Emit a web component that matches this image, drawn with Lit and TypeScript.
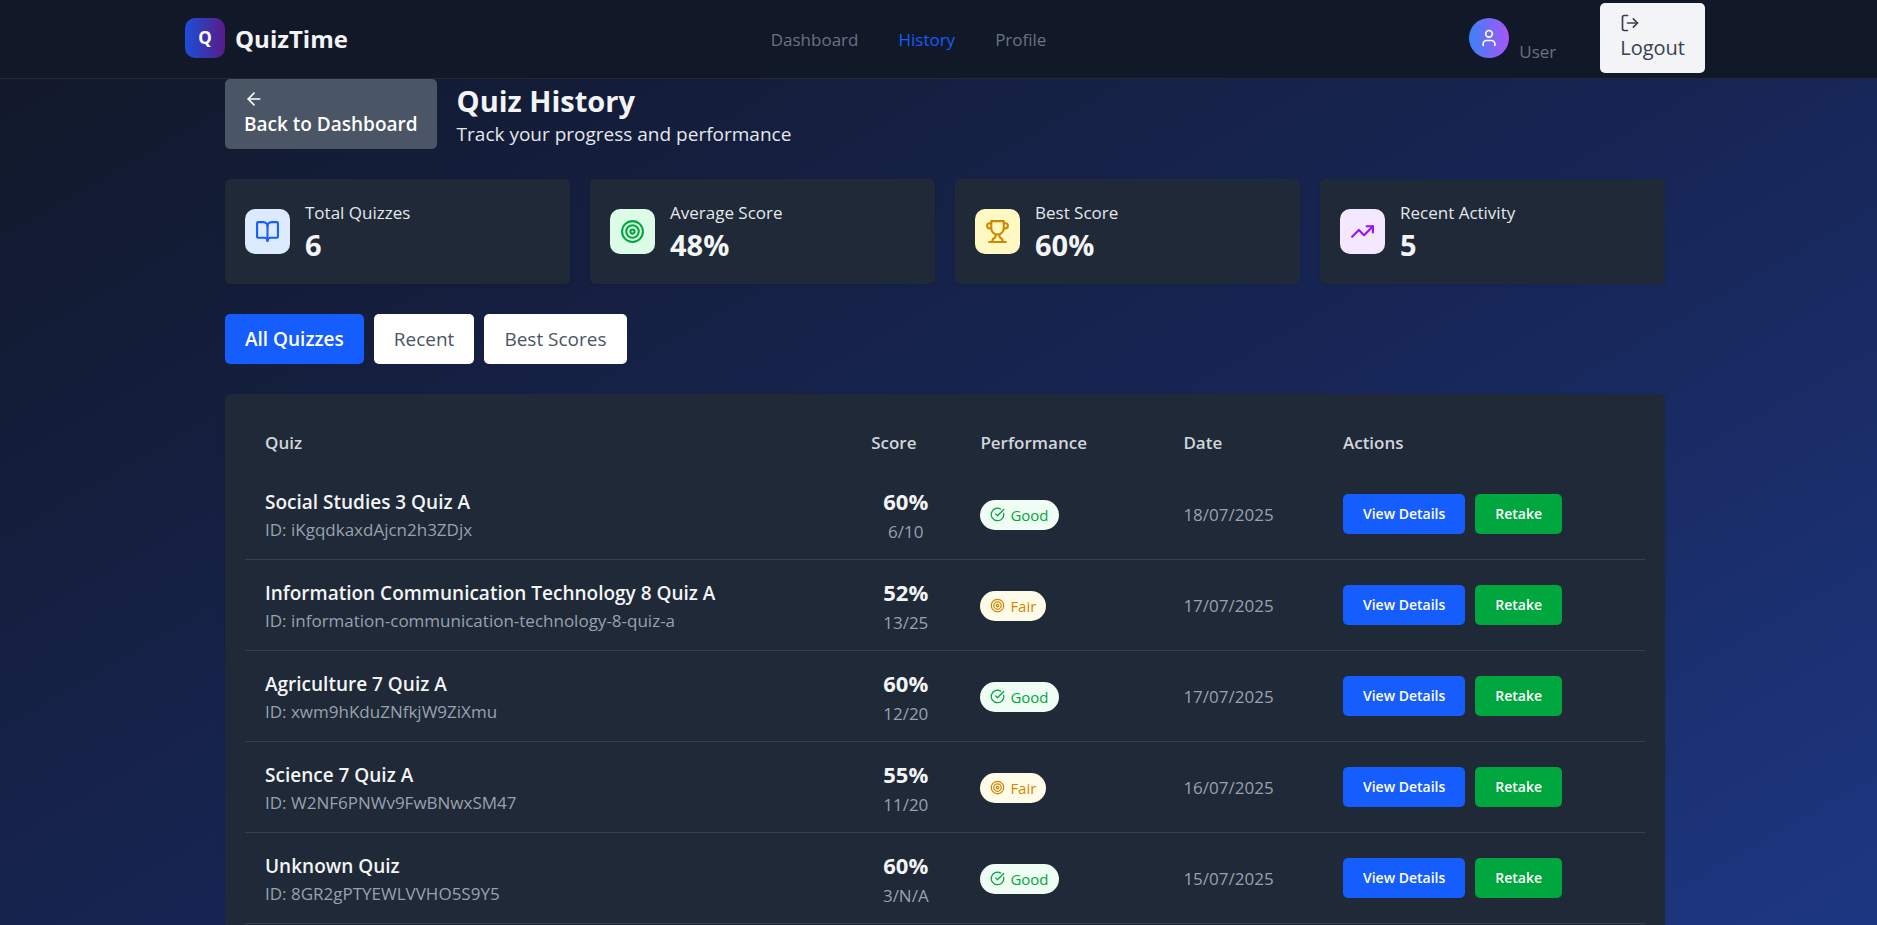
import { LitElement, html, css, svg } from "lit";
import { customElement, state } from "lit/decorators.js";
import { classMap } from "lit/directives/class-map.js";

const shapes = {
  book: svg`<path d="M12 7v14"/><path d="M3 18a1 1 0 0 1-1-1V4a1 1 0 0 1 1-1h5a4 4 0 0 1 4 4 4 4 0 0 1 4-4h5a1 1 0 0 1 1 1v13a1 1 0 0 1-1 1h-6a3 3 0 0 0-3 3 3 3 0 0 0-3-3z"/>`,
  target: svg`<circle cx="12" cy="12" r="10"/><circle cx="12" cy="12" r="6"/><circle cx="12" cy="12" r="2"/>`,
  trophy: svg`<path d="M6 9H4.500a2.500 2.500 0 0 1 0-5H6"/><path d="M18 9h1.500a2.500 2.500 0 0 0 0-5H18"/><path d="M4 22h16"/><path d="M10 14.660V17c0 .55-.47.98-.97 1.210C7.850 18.750 7 20.240 7 22"/><path d="M14 14.660V17c0 .55.47.98.97 1.210C16.150 18.750 17 20.240 17 22"/><path d="M18 2H6v7a6 6 0 0 0 12 0V2Z"/>`,
  trend: svg`<path d="M22 7l-8.500 8.500-5-5L2 17"/><path d="M16 7h6v6"/>`,
  check: svg`<path d="M21.801 10A10 10 0 1 1 17 3.335"/><path d="m9 11 3 3L22 4"/>`,
  arrowLeft: svg`<path d="m12 19-7-7 7-7"/><path d="M19 12H5"/>`,
  logout: svg`<path d="M9 21H5a2 2 0 0 1-2-2V5a2 2 0 0 1 2-2h4"/><path d="m16 17 5-5-5-5"/><path d="M21 12H9"/>`,
  user: svg`<path d="M19 21v-2a4 4 0 0 0-4-4H9a4 4 0 0 0-4 4v2"/><circle cx="12" cy="7" r="4"/>`,
};

type Shape = keyof typeof shapes;

const icon = (name: Shape) => html`
  <svg class="icon" viewBox="0 0 24 24" fill="none" stroke="currentColor" stroke-width="2"
    stroke-linecap="round" stroke-linejoin="round" aria-hidden="true">${shapes[name]}</svg>`;

interface Attempt {
  title: string;
  id: string;
  percent: number;
  marks: string;
  date: string;
}

const attempts: Attempt[] = [
  { title: "Social Studies 3 Quiz A", id: "iKgqdkaxdAjcn2h3ZDjx", percent: 60, marks: "6/10", date: "18/07/2025" },
  { title: "Information Communication Technology 8 Quiz A", id: "information-communication-technology-8-quiz-a", percent: 52, marks: "13/25", date: "17/07/2025" },
  { title: "Agriculture 7 Quiz A", id: "xwm9hKduZNfkjW9ZiXmu", percent: 60, marks: "12/20", date: "17/07/2025" },
  { title: "Science 7 Quiz A", id: "W2NF6PNWv9FwBNwxSM47", percent: 55, marks: "11/20", date: "16/07/2025" },
  { title: "Unknown Quiz", id: "8GR2gPTYEWLVVHO5S9Y5", percent: 60, marks: "3/N/A", date: "15/07/2025" },
];

const stats: { label: string; value: string; shape: Shape; tone: string }[] = [
  { label: "Total Quizzes", value: "6", shape: "book", tone: "blue" },
  { label: "Average Score", value: "48%", shape: "target", tone: "green" },
  { label: "Best Score", value: "60%", shape: "trophy", tone: "yellow" },
  { label: "Recent Activity", value: "5", shape: "trend", tone: "purple" },
];

const tabs = ["All Quizzes", "Recent", "Best Scores"];

@customElement("app-root")
export class AppRoot extends LitElement {
  @state() private tab = "All Quizzes";

  static styles = css`
    :host {
      display: block;
      box-sizing: border-box;
      min-height: 100vh;
      padding-left: 13px;
      color: #f3f4f6;
      font-family: "Open Sans", "Noto Sans", sans-serif;
      font-size: 19px;
      line-height: 30px;
      background: linear-gradient(to bottom right, #111827, #172554, #1e3a8a);
    }
    *, *::before, *::after { box-sizing: border-box; }
    h1, p { margin: 0; }
    a { color: inherit; text-decoration: none; }
    button { font: inherit; border: 0; cursor: pointer; }
    .icon { display: block; flex: none; width: 20px; height: 20px; }

    .topbar {
      margin-left: -13px;
      padding-left: 13px;
      background: #111827;
      border-bottom: 1px solid #1f2937;
    }
    .topbar-inner {
      display: flex;
      align-items: center;
      justify-content: space-between;
      max-width: 1520px;
      height: 78px;
      margin: 0 auto;
      padding-bottom: 2px;
    }
    .brand { display: flex; align-items: center; gap: 10px; font-size: 24px; line-height: 40px; font-weight: 700; }
    .brand-name { padding-top: 2px; }
    .brand-mark {
      display: grid;
      place-items: center;
      width: 40px;
      height: 40px;
      border-radius: 10px;
      background: linear-gradient(to right, #1d4ed8, #581c87);
      color: #fff;
      font-size: 17px;
    }
    .nav { display: flex; gap: 40px; padding-top: 3px; font-size: 17px; font-weight: 500; color: #6a7282; }
    .nav .current { color: #155dfc; }
    .account { display: flex; align-items: center; gap: 44px; }
    .who { display: flex; align-items: flex-end; gap: 10px; font-size: 17px; line-height: 12px; color: #6a7282; }
    .avatar {
      display: grid;
      place-items: center;
      width: 40px;
      height: 40px;
      border-radius: 50%;
      background: linear-gradient(to right, #3b82f6, #a855f7);
      color: #fff;
    }
    .stacked {
      display: flex;
      flex-direction: column;
      align-items: flex-start;
      padding: 10px 20px;
      border-radius: 5px;
      text-align: left;
    }
    .logout { background: #f3f4f6; color: #364153; font-size: 20px; font-weight: 500; }
    .back { padding: 10px 19px; background: #4a5565; color: #fff; font-weight: 600; }

    .page { max-width: 1440px; margin: 0 auto; padding-bottom: 140px; }
    .heading { display: flex; align-items: center; gap: 20px; }
    .heading-text { padding-top: 4px; }
    .heading h1 { font-size: 29px; line-height: 36px; font-weight: 700; }
    .heading p { color: #e5e7eb; }

    .stats { display: grid; grid-template-columns: repeat(4, 1fr); gap: 20px; margin-top: 30px; }
    .card { background: #1f2937; border-radius: 5px; box-shadow: 0 1px 3px rgba(0, 0, 0, 0.1); }
    .stat { display: flex; align-items: center; gap: 15px; padding: 20px; }
    .stat-icon { padding: 10px; border-radius: 10px; }
    .stat-icon .icon { width: 25px; height: 25px; }
    .blue { background: #dbeafe; color: #155dfc; }
    .green { background: #dcfce7; color: #00a63e; }
    .yellow { background: #fef9c2; color: #d08700; }
    .purple { background: #f3e8ff; color: #9810fa; }
    .stat-label { font-size: 17px; line-height: 27px; color: #e5e7eb; }
    .stat-value { font-size: 29px; line-height: 38px; font-weight: 700; }

    .tabs { display: flex; gap: 10px; margin-top: 30px; }
    .tab { padding: 10px 20px; border-radius: 5px; background: #fff; color: #4a5565; font-weight: 500; }
    .tab.active { background: #155dfc; color: #fff; font-weight: 600; }

    .history { margin-top: 30px; padding: 20px; }
    table { width: 100%; table-layout: fixed; border-collapse: collapse; }
    .c-quiz { width: 43.3%; }
    .c-score { width: 7.8%; }
    .c-perf { width: 14.5%; }
    .c-date { width: 11.4%; }
    th { padding: 16px 20px 14px; text-align: left; font-size: 17px; line-height: 25px; font-weight: 600; color: #d1d5dc; }
    td { padding: 15px 20px; font-size: 17px; }
    tbody tr { border-bottom: 1px solid #364153; }
    .title { font-size: 19px; line-height: 30px; font-weight: 600; }
    .muted { line-height: 25px; color: #99a1af; }
    .score { text-align: center; white-space: nowrap; }
    .percent { font-size: 22px; line-height: 35px; font-weight: 700; }
    .badge {
      display: inline-flex;
      align-items: center;
      gap: 5px;
      padding: 5px 10px;
      border-radius: 15px;
      font-size: 15px;
      line-height: 20px;
      font-weight: 500;
      vertical-align: middle;
    }
    .badge .icon { width: 15px; height: 15px; }
    .good { background: #f0fdf4; color: #00a63e; }
    .fair { background: #fefce8; color: #d08700; }
    .actions { display: flex; gap: 10px; }
    .action { padding: 10px 20px; border-radius: 5px; color: #fff; font-size: 14px; line-height: 20px; font-weight: 600; white-space: nowrap; }
    .details { background: #155dfc; }
    .retake { background: #00a63e; }
  `;

  private row(a: Attempt) {
    const good = a.percent >= 60;
    return html`
      <tr>
        <td><div class="title">${a.title}</div><div class="muted">ID: ${a.id}</div></td>
        <td class="score"><div class="percent">${a.percent}%</div><div class="muted">${a.marks}</div></td>
        <td>
          <span class="badge ${good ? "good" : "fair"}">${icon(good ? "check" : "target")}${good ? "Good" : "Fair"}</span>
        </td>
        <td class="muted">${a.date}</td>
        <td>
          <div class="actions">
            <button class="action details" type="button">View Details</button>
            <button class="action retake" type="button">Retake</button>
          </div>
        </td>
      </tr>`;
  }

  render() {
    return html`
      <header class="topbar">
        <div class="topbar-inner">
          <a class="brand" href="#"><span class="brand-mark">Q</span><span class="brand-name">QuizTime</span></a>
          <nav class="nav">
            <a href="#dashboard">Dashboard</a>
            <a class="current" href="#history" aria-current="page">History</a>
            <a href="#profile">Profile</a>
          </nav>
          <div class="account">
            <div class="who"><span class="avatar">${icon("user")}</span><span>User</span></div>
            <button class="stacked logout" type="button">${icon("logout")}<span>Logout</span></button>
          </div>
        </div>
      </header>
      <main class="page">
        <div class="heading">
          <button class="stacked back" type="button">${icon("arrowLeft")}<span>Back to Dashboard</span></button>
          <div class="heading-text">
            <h1>Quiz History</h1>
            <p>Track your progress and performance</p>
          </div>
        </div>
        <section class="stats">
          ${stats.map((s) => html`
            <div class="card stat">
              <div class="stat-icon ${s.tone}">${icon(s.shape)}</div>
              <div>
                <div class="stat-label">${s.label}</div>
                <div class="stat-value">${s.value}</div>
              </div>
            </div>`)}
        </section>
        <div class="tabs">
          ${tabs.map((t) => html`
            <button type="button" class=${classMap({ tab: true, active: t === this.tab })}
              aria-pressed=${t === this.tab ? "true" : "false"}
              @click=${() => { this.tab = t; }}>${t}</button>`)}
        </div>
        <section class="card history">
          <table>
            <colgroup>
              <col class="c-quiz"><col class="c-score"><col class="c-perf"><col class="c-date"><col>
            </colgroup>
            <thead>
              <tr><th>Quiz</th><th>Score</th><th>Performance</th><th>Date</th><th>Actions</th></tr>
            </thead>
            <tbody>${attempts.map((a) => this.row(a))}</tbody>
          </table>
        </section>
      </main>`;
  }
}
